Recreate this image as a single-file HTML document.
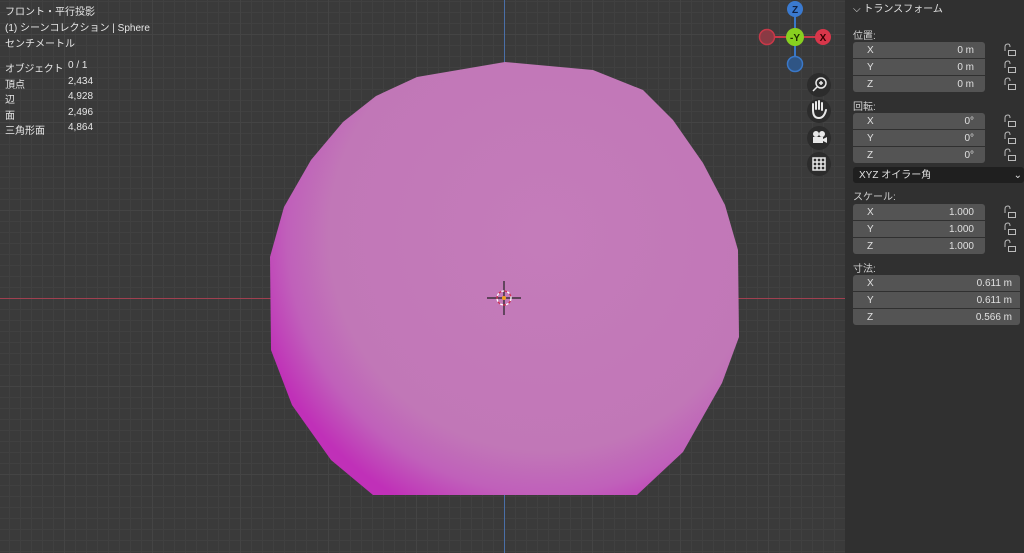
<!DOCTYPE html>
<html><head><meta charset="utf-8"><style>
body{margin:0;width:1024px;height:553px;overflow:hidden;background:#3a3a3a;font-family:"Liberation Sans","Noto Sans CJK JP",sans-serif;position:relative}
.vp{position:absolute;left:0;top:0;width:845px;height:553px;background-color:#3a3a3a;
background-image:linear-gradient(#444 1px,transparent 1px),linear-gradient(90deg,#444 1px,transparent 1px),linear-gradient(#404040 1px,transparent 1px),linear-gradient(90deg,#404040 1px,transparent 1px);
background-size:88px 88px,88px 88px,11px 11px,11px 11px;background-position:64px 34px,64px 34px,64px 34px,64px 34px}
.t{position:absolute;color:#e6e6e6;font-size:10px;white-space:nowrap}
.panel{position:absolute;left:845px;top:0;width:179px;height:553px;background:#303030}
.lbl{position:absolute;left:853px;color:#cfcfcf;font-size:10px}
.f{position:absolute;left:853px;width:132px;height:16px;background:#545454;color:#e0e0e0;font-size:10px;line-height:16px}
.f span{position:absolute;top:1px}
.f .a{left:14px}.f .v{right:11px}
</style></head><body>
<div class="vp"></div>
<svg style="position:absolute;left:0;top:0" width="845" height="553">
<defs>
<radialGradient id="g" cx="545" cy="235" r="300" gradientUnits="userSpaceOnUse">
<stop offset="0" stop-color="#c47cba"/><stop offset="0.72" stop-color="#c177b7"/><stop offset="0.86" stop-color="#c060ba"/><stop offset="1" stop-color="#c030b8"/>
</radialGradient>
<clipPath id="c"><rect x="0" y="0" width="845" height="495"/></clipPath></defs>
<line x1="504.5" y1="0" x2="504.5" y2="553" stroke="#4a6fa8" stroke-width="1"/>
<line x1="0" y1="298.5" x2="845" y2="298.5" stroke="#a04050" stroke-width="1"/>
<path d="M505,62 L593,70 643,90 673,120 703,163 725,205 738,250 739,337 722,383 683,452 637,495 373,495 331,460 292,405 271,350 270,257 284,207 311,160 343,122 376,96 417,77 Z" fill="url(#g)" clip-path="url(#c)"/>
<g stroke="#222" stroke-width="1.2"><line x1="487" y1="298" x2="521" y2="298"/><line x1="504" y1="281" x2="504" y2="315"/></g>
<circle cx="504" cy="298" r="7" fill="none" stroke="#fff" stroke-width="1.3" stroke-dasharray="3 3"/>
<circle cx="504" cy="298" r="7" fill="none" stroke="#d03050" stroke-width="1.3" stroke-dasharray="3 3" stroke-dashoffset="3"/>
<circle cx="504" cy="298" r="2" fill="#f0a020"/>
<line x1="795" y1="9" x2="795" y2="64" stroke="#3a78c8" stroke-width="2"/>
<line x1="767" y1="37" x2="823" y2="37" stroke="#c83848" stroke-width="2"/>
<circle cx="767" cy="37" r="7.5" fill="#8a3a44" stroke="#c83848" stroke-width="1.5"/>
<circle cx="795" cy="64" r="7.5" fill="#2f5585" stroke="#3a78c8" stroke-width="1.5"/>
<circle cx="823" cy="37" r="8" fill="#d8364a"/>
<circle cx="795" cy="9" r="8" fill="#3a7ad0"/>
<circle cx="795" cy="37" r="9" fill="#88d020"/>
<text x="823" y="41" font-size="10" font-weight="bold" fill="#300" text-anchor="middle" font-family="Liberation Sans">X</text>
<text x="795" y="13" font-size="10" font-weight="bold" fill="#102040" text-anchor="middle" font-family="Liberation Sans">Z</text>
<text x="795" y="41" font-size="10" font-weight="bold" fill="#203000" text-anchor="middle" font-family="Liberation Sans">-Y</text>
<g fill="#2c2c2c"><circle cx="819" cy="85" r="12"/><circle cx="819" cy="111" r="12"/><circle cx="819" cy="138" r="12"/><circle cx="819" cy="164" r="12"/></g>
<g stroke="#e8e8e8" fill="none" stroke-width="1.5">
<circle cx="821" cy="83" r="5"/><line x1="817" y1="87" x2="813" y2="91"/><line x1="819" y1="83" x2="823" y2="83"/><line x1="821" y1="81" x2="821" y2="85"/>
<rect x="813" y="158" width="12" height="12"/><line x1="817" y1="158" x2="817" y2="170"/><line x1="821" y1="158" x2="821" y2="170"/><line x1="813" y1="162" x2="825" y2="162"/><line x1="813" y1="166" x2="825" y2="166"/>
</g>
<path d="M813,110 L813,104 M816,109 L816,102 M819,109 L819,101 M822,110 L822,103 M813,110 Q813,118 819,118 Q824,118 826,110" stroke="#e8e8e8" stroke-width="2" fill="none" stroke-linecap="round"/>
<g fill="#e8e8e8"><circle cx="816" cy="134" r="3"/><circle cx="822" cy="134" r="3"/><rect x="813" y="137" width="10" height="6"/><path d="M823,139 L827,137 L827,143 L823,141Z"/></g>
</svg>
<div class="t" style="left:5px;top:3px">フロント・平行投影</div>
<div class="t" style="left:5px;top:19px">(1) シーンコレクション | Sphere</div>
<div class="t" style="left:5px;top:35px">センチメートル</div>
<div class="t" style="left:5px;top:60px;letter-spacing:-0.3px">オブジェクト</div><div class="t" style="left:68px;top:60px">0 / 1</div>
<div class="t" style="left:5px;top:76px">頂点</div><div class="t" style="left:68px;top:76px">2,434</div>
<div class="t" style="left:5px;top:91px">辺</div><div class="t" style="left:68px;top:91px">4,928</div>
<div class="t" style="left:5px;top:107px">面</div><div class="t" style="left:68px;top:107px">2,496</div>
<div class="t" style="left:5px;top:122px">三角形面</div><div class="t" style="left:68px;top:122px">4,864</div>
<div class="panel"></div>
<div class="lbl" style="left:853px;top:0px;color:#e0e0e0">⌵ トランスフォーム</div>
<div class="lbl" style="top:27px">位置:</div>
<div class="f" style="top:42px;border-radius:3px 3px 0 0"><span class="a">X</span><span class="v">0 m</span></div>
<div class="f" style="top:59px"><span class="a">Y</span><span class="v">0 m</span></div>
<div class="f" style="top:76px;border-radius:0 0 3px 3px"><span class="a">Z</span><span class="v">0 m</span></div>
<div class="lbl" style="top:98px">回転:</div>
<div class="f" style="top:113px;border-radius:3px 3px 0 0"><span class="a">X</span><span class="v">0°</span></div>
<div class="f" style="top:130px"><span class="a">Y</span><span class="v">0°</span></div>
<div class="f" style="top:147px;border-radius:0 0 3px 3px"><span class="a">Z</span><span class="v">0°</span></div>
<div class="f" style="top:167px;width:171px;background:#1f1f1f;border-radius:3px"><span style="left:6px">XYZ オイラー角</span><span style="right:2px">⌄</span></div>
<div class="lbl" style="top:188px">スケール:</div>
<div class="f" style="top:204px;border-radius:3px 3px 0 0"><span class="a">X</span><span class="v">1.000</span></div>
<div class="f" style="top:221px"><span class="a">Y</span><span class="v">1.000</span></div>
<div class="f" style="top:238px;border-radius:0 0 3px 3px"><span class="a">Z</span><span class="v">1.000</span></div>
<div class="lbl" style="top:260px">寸法:</div>
<div class="f" style="top:275px;width:167px;border-radius:3px 3px 0 0"><span class="a">X</span><span class="v" style="right:8px">0.611 m</span></div>
<div class="f" style="top:292px;width:167px"><span class="a">Y</span><span class="v" style="right:8px">0.611 m</span></div>
<div class="f" style="top:309px;width:167px;border-radius:0 0 3px 3px"><span class="a">Z</span><span class="v" style="right:8px">0.566 m</span></div>
<svg style="position:absolute;left:1003px;top:0" width="16" height="260" fill="none" stroke="#bbb" stroke-width="1">
<g id="l"><path d="M2,51 V47 Q2,44 5,44 Q7,44 7,47"/><rect x="5.5" y="50.5" width="7" height="5"/></g>
<use href="#l" y="17"/><use href="#l" y="34"/><use href="#l" y="71"/><use href="#l" y="88"/><use href="#l" y="105"/><use href="#l" y="162"/><use href="#l" y="179"/><use href="#l" y="196"/>
</svg>
</body></html>
